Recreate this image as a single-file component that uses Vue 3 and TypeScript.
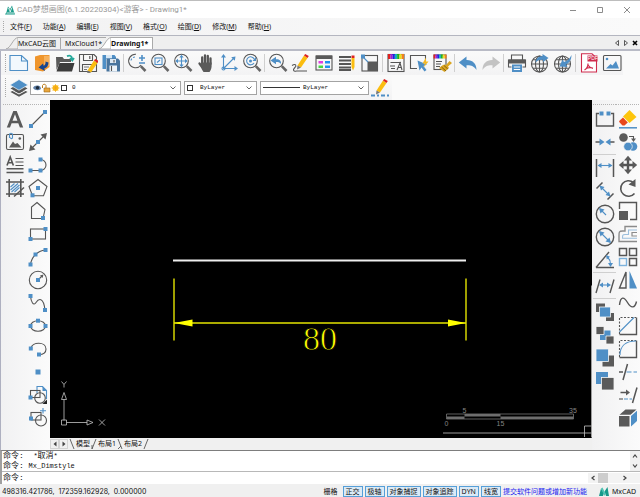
<script setup lang="ts">
import { ref } from 'vue'

interface Tool {
  icon: string
  label: string
}

const t = (icon: string, label: string): Tool => ({ icon, label })

const dot = (x: number, y: number): string =>
  `<rect class="fb" x="${x - 2}" y="${y - 2}" width="4" height="4"/>`

const lens = '<circle class="k" cx="8.5" cy="8" r="6.8"/><path class="k3" d="M13.8 13.2L18.5 18"/>'
const globe =
  '<circle class="k" cx="9.5" cy="11" r="8"/><ellipse class="k" cx="9.5" cy="11" rx="4" ry="8"/><path class="k" d="M1.5 11H17.5M9.5 3V19M3 6.8H16M3 15.2H16"/>'
const rainbow = (x: number, y: number, w: number, h: number): string => {
  const colors = ['#e02020', '#a020d0', '#2020e0', '#10b0c0', '#20b020', '#e8e020', '#f08020']
  const step = w / colors.length
  return colors
    .map((c, i) => `<rect x="${x + i * step}" y="${y}" width="${step}" height="${h}" fill="${c}"/>`)
    .join('')
}
const pencil = (x: number, y: number): string =>
  `<g transform="translate(${x} ${y})"><path fill="#fbbd10" d="M9 1.5L12.5 4L6 13.5L2.5 11.5Z"/><path fill="#d22" d="M10.2 0L13.8 2L12.5 4L9 1.5Z"/><path fill="#777" d="M2.5 11.5L6 13.5L2 15.5Z"/></g>`

const icons: Record<string, string> = {
  new: '<path class="bl" style="fill:#f2f8fd" d="M1 2.5H12.5L18.5 8V17.5H1Z"/><path class="bl" d="M12.5 2.5V8H18.5"/>',
  open: '<path fill="#ef952c" d="M3 3.5L8 2H17.5V14L11 18.5L3 17Z"/><path fill="#f7b15b" d="M12 3H17V13L12 15Z"/><path fill="#17468f" d="M13.5 8.5L16.5 9.5C16.5 13 14.5 15 12.3 15.5L13 18L6.5 14.5L11 10.5L11.6 12.8C13 12.2 13.8 10.8 13.5 8.5Z"/>',
  folder: '<path class="f" d="M1 4H7.5L9 6H16V9H5L1.5 17Z"/><path fill="#3c3c3c" d="M4.5 10H19.5L17 18.5H1.5Z"/><path fill="none" stroke="#24a89a" stroke-width="1.8" d="M12 3.2C15 2 17 3 17.2 6M15 5L17.3 7.5L19 5"/>',
  save: '<path class="k" d="M1.5 1.5H16L18.5 4V18.5H1.5Z"/><path class="k" d="M5.5 1.5V7.5H14.5V1.5M4.5 18V11.5H14"/><path fill="#777" d="M11 3H12.5V6H11ZM6 13.5H11V14.5H6ZM6 16H9V17H6Z"/>' + pencil(7, 6),
  saveall: '<path class="fb" d="M1.5 2H13.5L15 4V6H5V16H1.5Z"/><rect x="5" y="2" width="6" height="3.5" fill="#d8e8f5"/><path fill="#49759e" d="M5.5 5.5H17L19 7.5V18.5H5.5Z"/><rect x="9" y="6" width="6" height="4" fill="#dce9f4"/><rect x="8.5" y="12.5" width="7.5" height="6" fill="#eef4f9"/><path class="k" d="M10.5 13V18M13 7V9.5"/>',
  zoompm: '<path class="k" d="M14 12A6.8 6.8 0 1 1 9 1.2"/><path class="bl" stroke-dasharray="2 1.5" d="M4 7.5A4.5 4.5 0 0 1 8 4"/><path class="bl" style="stroke-width:1.6" d="M12 5H18M15 2V8M12 10H18"/><path class="k3" d="M13.8 13.2L18.5 18"/>',
  zoomwin: lens + '<rect class="bl" x="5" y="5" width="7" height="6.5"/><path class="bl" d="M7 9.5L10 7"/>',
  zoomext: lens + '<path class="bl" d="M8.5 3V13M3.5 8H13.5"/><path class="fb" d="M8.5 1.8L10.7 4.5H6.3ZM8.5 14.2L10.7 11.5H6.3ZM2.3 8L5 5.8V10.2ZM14.7 8L12 5.8V10.2Z"/>',
  pan: '<path fill="none" stroke="#555" stroke-width="2.3" stroke-linecap="round" d="M6.2 11V4.5M9 10V2.5M11.8 10V3M14.5 11V5.5M6 14L3.5 10.5"/><path class="f" d="M5 9.5H15.6V13.5C15.6 16 14 18.5 13.5 19H7.5C7 18 5 15.5 5 13.5Z"/>',
  ucs: '<path class="bl" d="M4.5 3V15.5H17M4.5 15.5L15 5"/><path class="fb" d="M4.5 1L7 4.5H2ZM19 15.5L15.5 18V13ZM16.5 3.5L15.8 7.8L12.2 4.2Z"/><circle class="bl" cx="4.5" cy="15.5" r="1.5"/>',
  zoomsel: lens + '<path class="bl" d="M12 10A4 4 0 1 1 12.2 6"/><circle class="fb" cx="8.5" cy="8" r="1.5"/><path class="fb" d="M14 4V8H10.5Z"/>',
  zoomprev: lens + '<path class="fb" d="M2.5 7.5L8 3.8V6.2C11.5 6 13.5 8 13 11C11.8 9.3 10 8.8 8 9V11.2Z"/>',
  draw: '<path class="k" d="M1 12.5C5 10 6 13 3.5 15C1.5 17 2.5 18.8 5.5 18H16"/>' + pencil(4, 1),
  table: '<rect class="k" x="2" y="3" width="16" height="14"/><rect class="f" x="2" y="2.5" width="16" height="3.5"/><path fill="#e13de1" d="M4.5 8H9V10.5H4.5Z"/><path fill="#2090f0" d="M11 8H16V10.5H11ZM11 12.5H16V15H11Z"/><path fill="#44d844" d="M4.5 12.5H9V15H4.5Z"/>',
  lines: '<path d="M2 4H14M2 7.5H14M2 11H14M2 14.5H14M2 17H14" fill="none" stroke="#555" stroke-width="1.8"/><path fill="#fbbd10" d="M14.5 5H17.5V14L16 17.5L14.5 14Z"/><path fill="#d22" d="M14.5 2.5H17.5V5H14.5Z"/>',
  scale: '<rect class="k" x="2" y="2.5" width="15.5" height="15.5"/><rect class="f" x="7.5" y="8.5" width="10" height="9.5"/><path class="bl" d="M2 3L8 9"/><rect class="fb" x="1" y="1.5" width="4" height="4"/>',
  textstyle: '<rect class="k" x="2" y="1.5" width="16" height="17"/>' + rainbow(2, 1, 16, 5) + '<path class="k" d="M4.5 9.5H15M4 13H9M5 15.5H9M11 17L14 10L16 17M12 14.5H15.3"/>',
  select: '<path class="k" d="M8 15.5H1.5V2.5H16.5V8"/><path class="fb" d="M8.5 7.5L18 11.5L14.5 13L17.5 17L15.5 18.5L12.5 14.5L10.5 17.5Z"/><path fill="#f7b921" d="M17 4.5L13.5 10.5H16L14.5 14.5L19.5 8.5H17Z"/>',
  brush: '<rect class="k" x="2" y="2" width="12" height="14.5"/>' + rainbow(1.5, 1.5, 13, 4) + '<path class="k" d="M4 8.5H10M4 11H9M4 13.5H8"/><path fill="#dba51f" d="M17.5 8L20 10L16 13.5L17 15L12.5 19L7 15L11 12L12.5 11.5L14 12Z"/><path fill="none" stroke="#785812" stroke-width=".9" d="M9.5 14L14 18M12 12.5L15.8 16"/>',
  undo: '<path class="fb" d="M.8 9.5L8.5 3.5V7C14.5 6.8 18.5 10.5 18.5 17C16 13 13 12 8.5 12.2V15.5Z"/>',
  redo: '<path fill="#c3c3c3" d="M19.2 9.5L11.5 3.5V7C5.5 6.8 1.5 10.5 1.5 17C4 13 7 12 11.5 12.2V15.5Z"/>',
  print: '<path class="k" d="M4.5 7V2H15.5V7M4.5 14H1.5V7H18.5V14H15.5"/><rect class="f" x="1.5" y="6.5" width="17" height="4"/><rect class="fb" x="5" y="11.5" width="10" height="7.5"/><path d="M6.8 14H13.2M6.8 16.5H13.2" stroke="#fff" stroke-width="1"/>',
  webup: globe + '<path class="fb" d="M5.5 9.5C6 5 9 3 12.5 3.2V1L18.5 5L13 9V6.8C10 6.5 8 7 5.5 9.5Z"/>',
  webdown: globe + '<path class="fb" d="M18.5 2C18.5 7 16 10.5 13 11.5L14.5 14L6.5 13.5L9.5 6.5L11 9C14 8 16.5 6 18.5 2Z"/>',
  pdf: '<path fill="#fff" stroke="#cf2b4c" stroke-width="1.1" d="M2.5 .8H13L17.5 5V19H2.5Z"/><rect x="8.5" y="2.5" width="10" height="6" fill="#cf2b4c"/><text x="8.8" y="7.3" font-size="5" fill="#fff" font-family="Liberation Sans, sans-serif">PDF</text><path fill="none" stroke="#cf2b4c" stroke-width="1.2" d="M5.5 17C8 15.5 9 13 9 10.5M9 12C10 14 12 15 14 15.3M6.5 15.7C9 14.4 11 14.2 14 15"/>',
  image: '<rect class="k" x="1.5" y="2.5" width="17.5" height="15" rx="1"/><path class="fb" d="M4 15.5L8.5 11L10.5 12.5L14 8L17 15.5Z"/><circle class="fb" cx="5" cy="6" r="1.3"/>',
  layers: '<path fill="#555" d="M1.5 14L10 18.8L18.5 14L16 12.5H4Z"/><path fill="#fff" d="M2 11.2L10 15.5L18 11.2V12.2L10 16.5L2 12.2Z"/><path fill="#555" d="M1.5 10.5L10 15L18.5 10.5L16 9H4Z"/><path class="fb" stroke="#f5f6f8" stroke-width=".7" d="M10 1.5L19 7L10 12.2L1 7Z"/>',
  linetype: '<path class="bl" style="stroke-width:1.8" stroke-dasharray="4 2 2 2" d="M0 17.5H19.5"/>' + pencil(3, 1),

  text: '<path class="f" d="M1.8 18.5L8.3 2H11.7L18.2 18.5H14.9L13.3 14.2H6.6L5 18.5ZM7.5 11.7H12.4L10 5.2Z"/>',
  picture: '<rect class="k" x="1.5" y="2.5" width="17" height="15" rx="1.5"/><path class="f" d="M4 15.5L8 9.5L10 12L12.5 11L16.5 15.5Z"/><circle class="f" cx="14.8" cy="6.5" r="1.3"/><path class="bl" d="M4.5 6V2.8C4.5.8 7.5.8 7.5 2.8V5.5C7.5 7 5.5 7 5.5 5.5"/>',
  mtext: '<path class="k" style="stroke-width:1.6" d="M2 10.5L5.2 2L8.4 10.5M3.2 7.8H7.2"/><path class="k" d="M10.5 3.5H18.5M10.5 7H18.5M10.5 10.5H18.5"/><path class="k" style="stroke-width:1.6" d="M1.5 13.8H18.5M1.5 17.5H18.5"/>',
  hatch: '<path class="k" style="stroke-width:1.6" d="M4.2 1V19M15.8 1V19M1 4H19M1 16H19"/><path class="bl" d="M5.5 9L9.5 5.5M5.5 12L13 5.5M6.5 14L14.5 7M9.5 14L14.5 9.5"/><path class="k" style="stroke-width:1.5" d="M9 18.5L19 9.5"/>',
  line: '<path class="k" d="M3 17L17 3"/>' + dot(3, 17) + dot(17, 3),
  ray: '<path class="k" d="M4 16L16 4"/><path class="f" d="M1 19L2.5 12.5L7.5 17.5ZM19 1L12.5 2.5L17.5 7.5Z"/>' + dot(10, 10),
  pline: '<path class="k" d="M3 15.5H12.5A5.5 5.5 0 0 0 12.5 4.5"/>' + dot(2.5, 15.5) + dot(12.5, 15.5) + dot(12.5, 4.5),
  polygon: '<path class="k" d="M10 1.5L19 8.5L15.5 17.8H4.5L1 8.5Z"/>' + dot(10, 10) + dot(4.5, 17.3),
  poly: '<path class="k" d="M9 1.5L17 8.5L15 17.5H3.5V6Z"/>' + dot(15, 17),
  rect: '<rect class="k" x="2.5" y="5" width="15" height="10"/>' + dot(2.5, 15) + dot(17.5, 5),
  arc: '<path class="k" d="M2.5 17.5C3.5 10 9 4 17.5 3"/>' + dot(2.5, 17.5) + dot(7.5, 7.5) + dot(17.5, 3),
  circle: '<circle class="k" cx="10" cy="10" r="8.7"/><path class="k" d="M10 10L14.5 5.5"/><path class="f" d="M15.5 4.5L14.5 8L12 5.5Z"/>' + dot(10, 10),
  spline: '<path class="k" d="M2.5 3C3 9 5.5 13.5 8 9.5S15.5 3.5 17 17"/>' + dot(2.5, 3) + dot(17, 17),
  ellipse: '<ellipse class="k" cx="10" cy="10" rx="7.5" ry="5.3"/>' + dot(2.5, 10) + dot(17.5, 10) + dot(10, 4.7),
  earc: '<path class="k" d="M3 9.5C4 2.5 18 2.5 18 10C18 13.5 15 15.5 11 15.5"/>' + dot(2.8, 9.5) + dot(11, 15.5),
  point: '<rect class="fb" x="7.5" y="7.5" width="5" height="5"/>',
  block: '<path class="bl" d="M9 8V1.5H14.5L18.5 5.5V14"/><path class="fb" d="M14.5 1.5L18.5 6H14.5Z"/><rect class="k" x="2.5" y="5.5" width="9.5" height="7"/><circle class="k" cx="12" cy="13" r="5.3"/><path fill="#222" d="M19 14.5V19H14.5Z"/>' + dot(2.5, 12.5),
  insert: '<rect class="k" x="3" y="4.5" width="10" height="7.5"/><circle class="k" cx="13" cy="12.5" r="5.5"/><path class="bl" d="M15 0V5.5M12 2.8H18"/>' + dot(3, 10.5),

  join: '<path class="k" style="stroke-width:1.4" d="M4 4.500H1.500V17H18.500V4.500H16"/>' + dot(6.5, 4.5) + dot(13.5, 4.5),
  meet: '<path class="k" style="stroke-width:1.400" d="M.5 10H5M15 10H19.500"/><path class="fb" d="M9.500 10L4.500 6.500V13.500ZM10.500 10L15.500 6.500V13.500Z"/>',
  dimlin: '<path class="k" style="stroke-width:1.5" d="M1.5 1V19M18.5 1V19"/><path class="bl" d="M4 7.5H16"/><path class="fb" d="M2.5 7.5L6.5 5V10ZM17.5 7.5L13.5 5V10Z"/>',
  dimali: '<path class="k" style="stroke-width:1.5" d="M1.5 7.5L7.5 1.5M12.5 18.5L18.5 12.5"/><path class="bl" d="M6 6L14 14"/><path class="fb" d="M4.5 4.5L9.5 6L6 9.5ZM15.5 15.5L10.5 14L14 10.5Z"/>',
  dimrad: '<circle class="k" style="stroke-width:1.4" cx="10" cy="10" r="8.7"/><path class="bl" d="M5 5L11 11"/><path class="fb" d="M4 4L9.5 5.5L5.5 9.5Z"/>',
  dimdia: '<circle class="k" style="stroke-width:1.4" cx="10" cy="10" r="8.7"/><path class="bl" d="M5 5L15 15"/><path class="fb" d="M4 4L9.5 5.5L5.5 9.5ZM16 16L10.5 14.5L14.5 10.5Z"/>',
  dimang: '<path class="k" style="stroke-width:1.4" d="M1 17.5L14 2M1 17.5H19"/><path class="bl" d="M12.5 7Q15.5 10 15.5 14"/><path class="fb" d="M11 5L15 6.8L11.8 9.5ZM15.5 17L13 13H18Z"/>',
  dimobl: '<path class="k" style="stroke-width:1.4" d="M1 17L5 3.5M15 17L19 3.5"/><path class="bl" d="M6 9H14"/><path class="fb" d="M4 9L8 6.5V11.5ZM16 9L12 6.5V11.5Z"/>',
  order1: '<path class="f" d="M1 1.5H10V10H1ZM11 11H19V19H11Z"/><rect class="fb" stroke="#f5f5f5" stroke-width=".8" x="4.5" y="5" width="11" height="10"/>',
  order2: '<rect class="fb" x="5" y="5.5" width="10.5" height="9.5"/><path class="f" stroke="#f5f5f5" stroke-width=".8" d="M1 1.5H9V9.5H1ZM11 11H19V19H11Z"/>',
  order3: '<rect class="f" x="7.5" y="7.5" width="11.5" height="11"/><rect class="fb" stroke="#f5f5f5" stroke-width=".8" x="1" y="1" width="12.5" height="12.5"/>',
  order4: '<rect class="fb" x="1" y="1" width="12" height="12"/><rect class="f" stroke="#f5f5f5" stroke-width=".8" x="6.5" y="6.5" width="12.5" height="12.5"/>',
  erase: '<path fill="#fdc50c" d="M11.5 1L18.5 8L11.5 14L5 7.5Z"/><path fill="#e8471b" d="M5 8.5L9.8 13.5L6.5 16.5H4.5L1.2 13V12Z"/><path class="bl" style="stroke-width:1.5" d="M1 18.8H19"/>',
  copy: '<circle class="f" cx="5.5" cy="5.5" r="4.3"/><path class="k" d="M11 4.5H15.5V8"/><path class="f" d="M15.5 10L13 6.5H18Z"/><circle class="fb" cx="15" cy="14.5" r="4.3"/><circle class="fb" stroke="#f5f5f5" stroke-width=".7" cx="10" cy="14.5" r="4.3"/>',
  move: '<path fill="none" stroke="#555" stroke-width="2.4" d="M10 4V16M4 10H16"/><path class="f" d="M10 .8L14 5.5H6ZM10 19.2L14 14.5H6ZM.8 10L5.5 6V14ZM19.2 10L14.5 6V14Z"/>',
  rotate: '<path class="k" style="stroke-width:1.6" d="M15.5 4.5A7.8 7.8 0 1 0 16.5 15.5"/><path class="f" d="M17.5 1V9L10.5 6.5Z"/>',
  resize: '<path class="k" style="stroke-width:1.4" d="M1.500 8V1.500H18.500V18.500H12"/><rect class="f" x="1" y="10" width="9" height="9"/>',
  offset: '<path fill="none" stroke="#8b8b8b" stroke-width="1.4" d="M19 2.5H7V7H4.5C1 7 1 8 1 12V17.5H19"/><path class="bl" d="M19 6H10.5V10.5H7C4.5 10.5 4.5 11.5 4.5 14.2H19" opacity=".55"/><path fill="none" stroke="#8b8b8b" stroke-width="1.2" d="M19 8.5H14V12H19"/>',
  array: '<path class="k" style="stroke-width:1.5" d="M1.500 1.500H8.500V8.500H1.500ZM11.500 1.500H18.500V8.500H11.500ZM11.500 11.500H18.500V18.500H11.500Z"/><rect fill="none" stroke="#7db2dc" stroke-width="1.4" x="1.5" y="11.5" width="7" height="7"/>',
  mirror: '<path class="k" style="stroke-width:1.4" d="M8 2V18H1.5Z"/><path class="fb" d="M11.5 1V18.5H19Z"/>',
  curve: '<path class="k" style="stroke-width:1.4" d="M1.500 12C2.500 3 6 3.500 9.500 9.500S17 15.500 18.500 8.500"/>',
  chamfer: '<path class="k" style="stroke-width:1.4" d="M18.500 1.500V18.500H1.500"/><path class="k" stroke-dasharray="2 1.5" d="M1.5 18V1.5H18"/><path class="bl" d="M1.5 16L16 1.5"/>',
  fillet: '<path class="k" style="stroke-width:1.4" d="M18.500 1.500V18.500H1.500"/><path class="k" stroke-dasharray="2 1.5" d="M1.5 18V1.5H18"/><path class="bl" d="M2 16C2 7 8 2 18 2"/>',
  trim: '<path class="k" style="stroke-width:1.5" d="M1 10H5M5 18L9.5 2"/><path class="bl" stroke-dasharray="5 2" d="M8.5 10H19"/>',
  extend: '<path class="k" style="stroke-width:1.5" d="M2.5 7.5H9M14.5 18L19 2.5"/><path class="f" d="M12 7.5L8 4.5V10.5Z"/><path class="k" d="M1 14H5"/><path class="bl" stroke-dasharray="4 1.5" d="M6 14H14"/>',
  cube: '<rect class="f" x="1" y="8" width="10.5" height="10.5"/><path class="f" d="M1.5 6.7L7.5 1.5H18.5L12.5 6.7Z"/><path class="fb" d="M13 8L19 2.8V13L13 18.5Z"/>',
}

const menus = ['文件(F)', '功能(A)', '编辑(E)', '视图(V)', '格式(O)', '绘图(D)', '修改(M)', '帮助(H)'].map((m) => ({
  before: m.slice(0, 3),
  key: m.slice(3, 4),
}))

const documents = ['MxCAD云图', 'MxCloud1*', 'Drawing1*']
const activeDocument = ref('Drawing1*')

const toolbar: Tool[][] = [
  [t('new', '新建'), t('open', '打开'), t('folder', '打开文件夹'), t('save', '保存'), t('saveall', '全部保存')],
  [t('zoompm', '缩放'), t('zoomwin', '窗口缩放'), t('zoomext', '范围缩放'), t('pan', '平移'), t('ucs', '坐标系'), t('zoomsel', '实时缩放')],
  [t('zoomprev', '上一视图'), t('draw', '画线'), t('table', '颜色'), t('lines', '线型'), t('scale', '比例')],
  [t('textstyle', '文字样式'), t('select', '快速选择'), t('brush', '特性匹配')],
  [t('undo', '撤销'), t('redo', '重做')],
  [t('print', '打印'), t('webup', '上传'), t('webdown', '下载')],
  [t('pdf', '输出 PDF'), t('image', '输出图片')],
]

const annotateTools: Tool[] = [t('text', '单行文字'), t('picture', '插入图片'), t('mtext', '多行文字'), t('hatch', '填充')]
const drawTools: Tool[] = [
  t('line', '直线'), t('ray', '构造线'), t('pline', '多段线'), t('polygon', '正多边形'), t('poly', '多边形'),
  t('rect', '矩形'), t('arc', '圆弧'), t('circle', '圆'), t('spline', '样条曲线'), t('ellipse', '椭圆'),
  t('earc', '椭圆弧'), t('point', '点'), t('block', '创建块'), t('insert', '插入块'),
]
const dimTools: Tool[][] = [
  [t('join', '打断'), t('meet', '合并')],
  [t('dimlin', '线性标注'), t('dimali', '对齐标注'), t('dimrad', '半径标注'), t('dimdia', '直径标注'), t('dimang', '角度标注')],
  [t('dimobl', '倾斜标注')],
  [t('order1', '前置'), t('order2', '后置'), t('order3', '置于对象之上'), t('order4', '置于对象之下')],
]
const modifyTools: Tool[] = [
  t('erase', '删除'), t('copy', '复制'), t('move', '移动'), t('rotate', '旋转'), t('resize', '缩放对象'),
  t('offset', '偏移'), t('array', '阵列'), t('mirror', '镜像'), t('curve', '曲线'), t('chamfer', '倒角'),
  t('fillet', '圆角'), t('trim', '修剪'), t('extend', '延伸'), t('cube', '分解'),
]

const toggles = ref([
  { label: '栅格', on: false },
  { label: '正交', on: true },
  { label: '极轴', on: true },
  { label: '对象捕捉', on: true },
  { label: '对象追踪', on: true },
  { label: 'DYN', on: true },
  { label: '线宽', on: true },
])

const command = ref('')
</script>

<template>
  <div class="app">
    <header class="title-bar">
      <svg class="logo" viewBox="0 0 10 10" aria-hidden="true">
        <path fill="#1b9c8a" d="M1.5 7L3 1.5L5 4L7 .5L9 7L10 9.5H0Z" />
        <path stroke="#fff" stroke-width=".8" fill="none" d="M3.5 3L5.5 7M7 2.5L5 7M1.5 8H9" />
      </svg>
      <h1>CAD梦想画图(6.1.20220304)&lt;游客&gt; - Drawing1*</h1>
      <div class="window-buttons">
        <button aria-label="最小化"><svg viewBox="0 0 8 8"><path d="M1 4.5H7" /></svg></button>
        <button aria-label="最大化"><svg viewBox="0 0 8 8"><path d="M1.5 1.5H6.5V6.5H1.5Z" /></svg></button>
        <button aria-label="关闭"><svg viewBox="0 0 8 8"><path d="M1 1L7 7M7 1L1 7" /></svg></button>
      </div>
    </header>

    <nav class="menu-bar">
      <span class="grip"></span>
      <button v-for="m in menus" :key="m.key">{{ m.before }}<u>{{ m.key }}</u>)</button>
    </nav>

    <div class="doc-tabs">
      <button
        v-for="d in documents"
        :key="d"
        class="doc-tab"
        :class="{ active: d === activeDocument }"
        @click="activeDocument = d"
      >
        <svg v-if="d !== 'MxCloud1*'" class="slant" viewBox="0 0 12 12"><path d="M0 12C5 11 7 1 12 .5V12Z" /></svg>
        <span>{{ d }}</span>
      </button>
      <div class="doc-nav">
        <button aria-label="上一个"><svg viewBox="0 0 6 8"><path d="M4.5 1.5V6.5L1.5 4Z" /></svg></button>
        <button aria-label="下一个"><svg viewBox="0 0 6 8"><path d="M1.5 1.5V6.5L4.5 4Z" /></svg></button>
        <button aria-label="关闭标签"><svg viewBox="0 0 6 8"><path class="bold" d="M1 2L5 6M5 2L1 6" /></svg></button>
      </div>
    </div>

    <div class="frame">
      <div class="toolbar standard">
        <span class="grip"></span>
        <div v-for="(group, i) in toolbar" :key="i" class="group">
          <button v-for="tool in group" :key="tool.icon" class="tool" :aria-label="tool.label">
            <svg class="icon" viewBox="0 0 20 20" v-html="icons[tool.icon]"></svg>
          </button>
        </div>
      </div>

      <div class="toolbar properties">
        <span class="grip"></span>
        <button class="tool" aria-label="图层"><svg class="icon" viewBox="0 0 20 20" v-html="icons.layers"></svg></button>
        <label class="combo layer">
          <svg class="layer-state" viewBox="0 0 36 10" aria-hidden="true">
            <path fill="#5f7fa6" d="M0 5C1.5 2 5.5 2 7.5 4L8 6C5 8 2 7.5 0 5Z" />
            <circle cx="4.5" cy="4.8" r="1.7" fill="#1f2c3c" />
            <path fill="none" stroke="#b87b1c" d="M9.5 5V2.5C10 .8 12.5.8 13 2.5V5" />
            <path fill="#e8a63c" stroke="#9a6516" stroke-width=".6" d="M11 5H17V9H11Z" />
            <circle cx="22.5" cy="5" r="3" fill="#fcc010" />
            <path stroke="#f0a020" stroke-width=".7" d="M22.5 1V9M18.5 5H26.5M19.7 2.2L25.3 7.8M25.3 2.2L19.7 7.8" />
            <rect x="28.5" y="2.5" width="5" height="5" fill="#fff" stroke="#333" />
          </svg>
          <select aria-label="当前图层"><option>0</option></select>
          <svg class="chevron" viewBox="0 0 8 6"><path d="M1.5 1.5L4 4L6.5 1.5" /></svg>
        </label>
        <label class="combo color">
          <span class="swatch"></span>
          <select aria-label="颜色"><option>ByLayer</option></select>
          <svg class="chevron" viewBox="0 0 8 6"><path d="M1.5 1.5L4 4L6.5 1.5" /></svg>
        </label>
        <label class="combo linetype">
          <span class="sample"></span>
          <select aria-label="线型"><option>ByLayer</option></select>
          <svg class="chevron" viewBox="0 0 8 6"><path d="M1.5 1.5L4 4L6.5 1.5" /></svg>
        </label>
        <button class="tool" aria-label="线型管理"><svg class="icon" viewBox="0 0 20 20" v-html="icons.linetype"></svg></button>
      </div>

      <main class="workspace">
        <aside class="side left">
          <div class="column fixed">
            <button v-for="tool in annotateTools" :key="tool.icon" class="tool" :aria-label="tool.label">
              <svg class="icon" viewBox="0 0 20 20" v-html="icons[tool.icon]"></svg>
            </button>
          </div>
          <div class="column spread">
            <button v-for="tool in drawTools" :key="tool.icon" class="tool" :aria-label="tool.label">
              <svg class="icon" viewBox="0 0 20 20" v-html="icons[tool.icon]"></svg>
            </button>
          </div>
        </aside>

        <section class="view">
          <svg class="canvas" viewBox="0 0 542 337" role="img" aria-label="图形窗口">
            <path class="white-line" d="M123 160H416" />
            <g class="dimension">
              <path d="M124 178V240M416 178V240M124 222.5H416" />
              <path class="head" d="M124 222.5L142.5 219V226ZM416 222.5L398 219V226Z" />
              <text x="253" y="249">80</text>
            </g>
            <g class="ucs">
              <path d="M14 320V299M16.5 322H37M11.5 319.5H16.5V324.5H11.5ZM14 292L11.5 299H16.5ZM43 322L37 319.5V324.5ZM14 284V287M11.5 281L14 284L16.5 281M49 319L55 325M55 319L49 325" />
            </g>
            <g class="scale">
              <path d="M396.5 313.5H523.5V318.5H396.5Z" />
              <path class="fill" d="M414.5 313.5H450.5V316H414.5ZM397 316H414.5V318.5H397ZM450.5 316H523.5V318.5H450.5Z" />
              <text x="414.5" y="312">5</text>
              <text x="523" y="312">35</text>
              <text x="396.5" y="325">0</text>
              <text x="450.5" y="325">15</text>
            </g>
            <path class="cursor" d="M393 332.5H541.5M541.5 185V337M534.5 336.5V325.5H541.5" />
          </svg>
          <div class="layout-tabs">
            <button class="step" aria-label="向左"><svg viewBox="0 0 6 8"><path d="M4.5 1.5V6.5L1.5 4Z" /></svg></button>
            <button class="step" aria-label="向右"><svg viewBox="0 0 6 8"><path d="M1.5 1.5V6.5L4.5 4Z" /></svg></button>
            <svg class="edge" viewBox="0 0 6 10"><path d="M1 0L5 10" /></svg>
            <button>模型</button>
            <svg class="edge" viewBox="0 0 6 10"><path d="M1 10L5 0M1 6L1 10" /></svg>
            <button>布局1</button>
            <svg class="edge" viewBox="0 0 6 10"><path d="M1 0L5 10M1 10L4 7" /></svg>
            <button>布局2</button>
            <svg class="edge" viewBox="0 0 6 10"><path d="M1 10L5 0" /></svg>
          </div>
        </section>

        <aside class="side right">
          <div class="column fixed">
            <div v-for="(group, i) in dimTools" :key="i" class="stack">
              <button v-for="tool in group" :key="tool.icon" class="tool" :aria-label="tool.label">
                <svg class="icon" viewBox="0 0 20 20" v-html="icons[tool.icon]"></svg>
              </button>
            </div>
          </div>
          <div class="column spread">
            <button v-for="tool in modifyTools" :key="tool.icon" class="tool" :aria-label="tool.label">
              <svg class="icon" viewBox="0 0 20 20" v-html="icons[tool.icon]"></svg>
            </button>
          </div>
        </aside>
      </main>
    </div>

    <section class="console">
      <div class="history">
        <div class="log">
          <p>命令: &nbsp;<span>*</span>取消<span>*</span></p>
          <p>命令: <span>Mx_Dimstyle</span></p>
        </div>
        <div class="scroll-v">
          <button aria-label="向上滚动"><svg viewBox="0 0 6 6"><path d="M1 4.5L3 2L5 4.5" /></svg></button>
          <button aria-label="向下滚动"><svg viewBox="0 0 6 6"><path d="M1 1.5L3 4L5 1.5" /></svg></button>
        </div>
      </div>
      <div class="prompt">
        <label for="command">命令:</label>
        <input id="command" v-model="command" type="text" />
        <div class="scroll-h">
          <button aria-label="向左滚动"><svg viewBox="0 0 6 6"><path d="M4.5 1L2 3L4.5 5" /></svg></button>
          <span class="thumb"></span>
          <button aria-label="向右滚动"><svg viewBox="0 0 6 6"><path d="M1.5 1L4 3L1.5 5" /></svg></button>
        </div>
      </div>
    </section>

    <footer class="status">
      <span class="coords">498316.421786,&nbsp; 172359.162928,&nbsp; 0.000000</span>
      <button
        v-for="s in toggles"
        :key="s.label"
        class="toggle"
        :class="{ on: s.on }"
        :aria-pressed="s.on"
        @click="s.on = !s.on"
      >{{ s.label }}</button>
      <a href="#feedback">提交软件问题或增加新功能</a>
      <span class="brand">
        <svg viewBox="0 0 10 9" aria-hidden="true">
          <path fill="#16998a" d="M0 9L2 1.5L5 6L4 9ZM10 9L8.5 0L5.5 4.5L7 9Z" />
          <path fill="#4cc3b2" d="M2 1.5L3.5.5L6.5 6.5L5.5 9Z" />
        </svg>
        MxCAD
      </span>
    </footer>
  </div>
</template>

<style>
body {
  background: #f0f0f0;
}
</style>

<style scoped>
.app {
  display: flex;
  flex-direction: column;
  min-height: 100vh;
  background: #f0f0f0;
  color: #111;
  font-family: "Noto Sans", "Noto Sans CJK SC", sans-serif;
  font-size: 7px;
  line-height: 10px;
}
.app * {
  box-sizing: border-box;
}
button {
  margin: 0;
  padding: 0;
  border: 0;
  background: none;
  color: inherit;
  font: inherit;
  white-space: nowrap;
}
svg {
  display: block;
}

.title-bar {
  display: flex;
  align-items: center;
  height: 18px;
  padding-left: 5px;
  border-top: 1px solid #bdbdbd;
  background: #fff;
}
.logo {
  width: 10px;
  height: 10px;
}
h1 {
  flex: 1;
  margin: 0 0 0 2px;
  color: #999;
  font-family: Roboto, "Noto Sans CJK SC", sans-serif;
  font-size: 8px;
  font-weight: 400;
}
.window-buttons {
  display: flex;
}
.window-buttons button {
  display: grid;
  place-items: center;
  width: 27px;
  height: 16px;
}
.window-buttons svg {
  width: 8px;
  height: 8px;
}
.window-buttons path {
  fill: none;
  stroke: #8c8c8c;
}

.grip {
  align-self: stretch;
  width: 2px;
  margin: 3px 0 3px 3px;
  border-left: 1px dotted #a8a8a8;
}
.menu-bar {
  display: flex;
  align-items: center;
  gap: 11px;
  height: 17px;
  background: linear-gradient(90deg, #f2f2f3, #fafafa);
}
.menu-bar .grip {
  margin-right: -6px;
}

.doc-tabs {
  display: flex;
  align-items: flex-end;
  height: 16px;
  padding-left: 6px;
  border-top: 1px solid #b4b6c0;
  border-bottom: 2px solid #b9bbc6;
  background: #efefef;
}
.doc-tab {
  display: flex;
  align-items: center;
  height: 12px;
  border-right: 1px solid #aaa;
}
.doc-tab span {
  display: flex;
  align-items: center;
  align-self: stretch;
  padding-right: 4px;
  border-top: 1px solid #aaa;
}
.doc-tab:nth-child(2) {
  border-right: 0;
}
.doc-tab:nth-child(2) span {
  padding-left: 4px;
}
.doc-tab.active {
  z-index: 1;
  margin-left: -7px;
  font-weight: 700;
}
.doc-tab.active span {
  background: #fff;
}
.slant {
  width: 12px;
  height: 12px;
}
.slant path {
  fill: #efefef;
  stroke: #aaa;
}
.active .slant path {
  fill: #fff;
}
.doc-nav {
  display: flex;
  gap: 3px;
  align-self: center;
  margin-left: auto;
  padding-right: 2px;
}
.doc-nav svg,
.step svg {
  width: 6px;
  height: 8px;
}
.doc-nav path {
  fill: none;
  stroke: #333;
  stroke-width: 0.8;
}
.doc-nav .bold {
  stroke: #000;
  stroke-width: 1.6;
}

.frame {
  display: flex;
  flex: 1;
  flex-direction: column;
  border-left: 1px solid #aeb0c0;
  background: #fafafa;
}
.toolbar {
  display: flex;
  align-items: center;
  align-self: flex-start;
  background: linear-gradient(#fafafa, #f3f3f4);
}
.toolbar > .grip {
  margin-left: 4px;
}
.standard {
  height: 24px;
}
.properties {
  height: 25px;
}
.group {
  display: flex;
}
.group + .group {
  padding-left: 1px;
}
.group + .group::before {
  width: 1px;
  height: 18px;
  margin-right: 1px;
  align-self: center;
  background: #cfcfcf;
  content: "";
}
.tool {
  display: grid;
  place-items: center;
  flex: none;
  width: 23px;
  height: 23px;
}
.icon {
  width: 20px;
  height: 20px;
}
.icon :deep(.k) {
  fill: none;
  stroke: #555;
  stroke-width: 1.1;
}
.icon :deep(.k3) {
  fill: none;
  stroke: #666;
  stroke-width: 2.6;
}
.icon :deep(.bl) {
  fill: none;
  stroke: #4f8fc6;
  stroke-width: 1.1;
}
.icon :deep(.f) {
  fill: #5a5a5a;
}
.icon :deep(.fb) {
  fill: #4f8fc6;
}

.combo {
  display: flex;
  align-items: center;
  height: 14px;
  margin-right: 3px;
  padding: 0 3px 0 2px;
  border: 1px solid #a3a3a3;
  background: #fff;
}
.combo select {
  flex: 1;
  min-width: 0;
  padding: 0;
  border: 0;
  appearance: none;
  background: none;
  color: #111;
  font: 6px/10px "Liberation Mono", monospace;
}
.layer {
  width: 151px;
}
.layer select {
  margin-left: 3px;
}
.color {
  width: 73px;
}
.linetype {
  width: 109px;
  margin-right: 0;
}
.layer-state {
  width: 36px;
  height: 10px;
}
.swatch {
  width: 6px;
  height: 6px;
  margin-right: 7px;
  border: 1px solid #333;
}
.sample {
  width: 37px;
  margin-right: 3px;
  border-top: 1px solid #333;
}
.chevron {
  width: 8px;
  height: 6px;
}
.chevron path {
  fill: none;
  stroke: #666;
}

.workspace {
  display: flex;
  flex: 1;
}
.side {
  display: flex;
  width: 49px;
  padding: 4px 1px 21px 2px;
  background: linear-gradient(90deg, #f1f1f2, #fbfbfb);
}
.right {
  width: 48px;
  padding-left: 1px;
}
.column {
  display: flex;
  flex-direction: column;
  width: 23px;
  padding-top: 2px;
  border-top: 1px dotted #b4b4b4;
}
.spread {
  justify-content: space-between;
}
.spread .tool {
  flex: 0 1 23px;
  min-height: 20px;
}
.stack + .stack {
  margin-top: 1px;
  padding-top: 1px;
  border-top: 1px solid #cfcfcf;
}
.view {
  display: flex;
  flex: 1;
  flex-direction: column;
  min-width: 0;
}
.canvas {
  flex: 1;
  width: 100%;
  min-height: 0;
  background: #000;
}
.white-line {
  fill: none;
  stroke: #eee;
  stroke-width: 2;
}
.dimension path {
  fill: none;
  stroke: #e3e300;
  stroke-width: 1.4;
}
.dimension .head {
  fill: #ff0;
  stroke: none;
}
.dimension text {
  fill: #ff0;
  stroke: #000;
  stroke-width: 0.8;
  font: 34px "Liberation Serif", serif;
}
.ucs path,
.cursor {
  fill: none;
  stroke: #c4c4c4;
  stroke-width: 0.8;
}
.scale path {
  fill: none;
  stroke: #777;
  stroke-width: 0.8;
}
.scale .fill {
  fill: #6e6e6e;
  stroke: none;
}
.scale text {
  fill: #858585;
  font: 7px "Liberation Sans", sans-serif;
  text-anchor: middle;
}
.layout-tabs {
  display: flex;
  align-items: center;
  height: 12px;
  background: #f0f0f0;
}
.layout-tabs button + .edge {
  margin-left: 1px;
}
.layout-tabs .edge + button {
  margin-left: 1px;
}
.step {
  display: grid;
  place-items: center;
  width: 9px;
  height: 10px;
  border: 1px solid #d4d4d4;
}
.step path {
  fill: #444;
}
.edge {
  width: 6px;
  height: 10px;
}
.edge path {
  fill: none;
  stroke: #444;
  stroke-width: 0.8;
}

.console {
  border-top: 1px solid #7d7d7d;
  border-left: 2px solid #a0a0a0;
  background: #fff;
  font-family: "Liberation Mono", "Noto Sans CJK SC", monospace;
  font-size: 8px;
}
.console p {
  margin: 0;
}
.console span {
  font-size: 7px;
}
.history {
  display: flex;
  justify-content: space-between;
  padding-left: 1px;
  border-bottom: 1px solid #b8b8b8;
}
.history button,
.prompt button {
  display: grid;
  place-items: center;
  width: 10px;
  height: 10px;
}
.history svg,
.prompt svg {
  width: 6px;
  height: 6px;
}
.history path,
.prompt path {
  fill: none;
  stroke: #444;
  stroke-width: 1.2;
}
.scroll-v {
  background: #f0f0f0;
}
.prompt {
  display: flex;
  align-items: center;
  height: 12px;
  padding-left: 1px;
}
.prompt input {
  flex: 1;
  min-width: 0;
  height: 10px;
  padding: 0;
  border: 0;
  outline: 0;
  font: inherit;
}
.scroll-h {
  display: flex;
  width: 52px;
  background: #f3f3f3;
}
.scroll-h .thumb {
  width: 10px;
  margin-right: 12px;
  background: #cdcdcd;
}

.status {
  display: flex;
  align-items: center;
  gap: 2px;
  height: 14px;
  padding: 1px 4px 0 2px;
  background: #f0f0f0;
}
.coords {
  margin-right: auto;
  font-family: Inter, sans-serif;
}
.toggle {
  height: 11px;
  padding: 0 2px;
  border: 1px solid transparent;
  line-height: 9px;
}
.toggle.on {
  border-color: #569fd8;
  background: #dbeaf6;
}
.status a {
  color: #1a1af0;
  text-decoration: none;
  white-space: nowrap;
}
.brand {
  display: flex;
  align-items: center;
  gap: 3px;
  margin-left: 10px;
}
.brand svg {
  width: 10px;
  height: 9px;
}
</style>
